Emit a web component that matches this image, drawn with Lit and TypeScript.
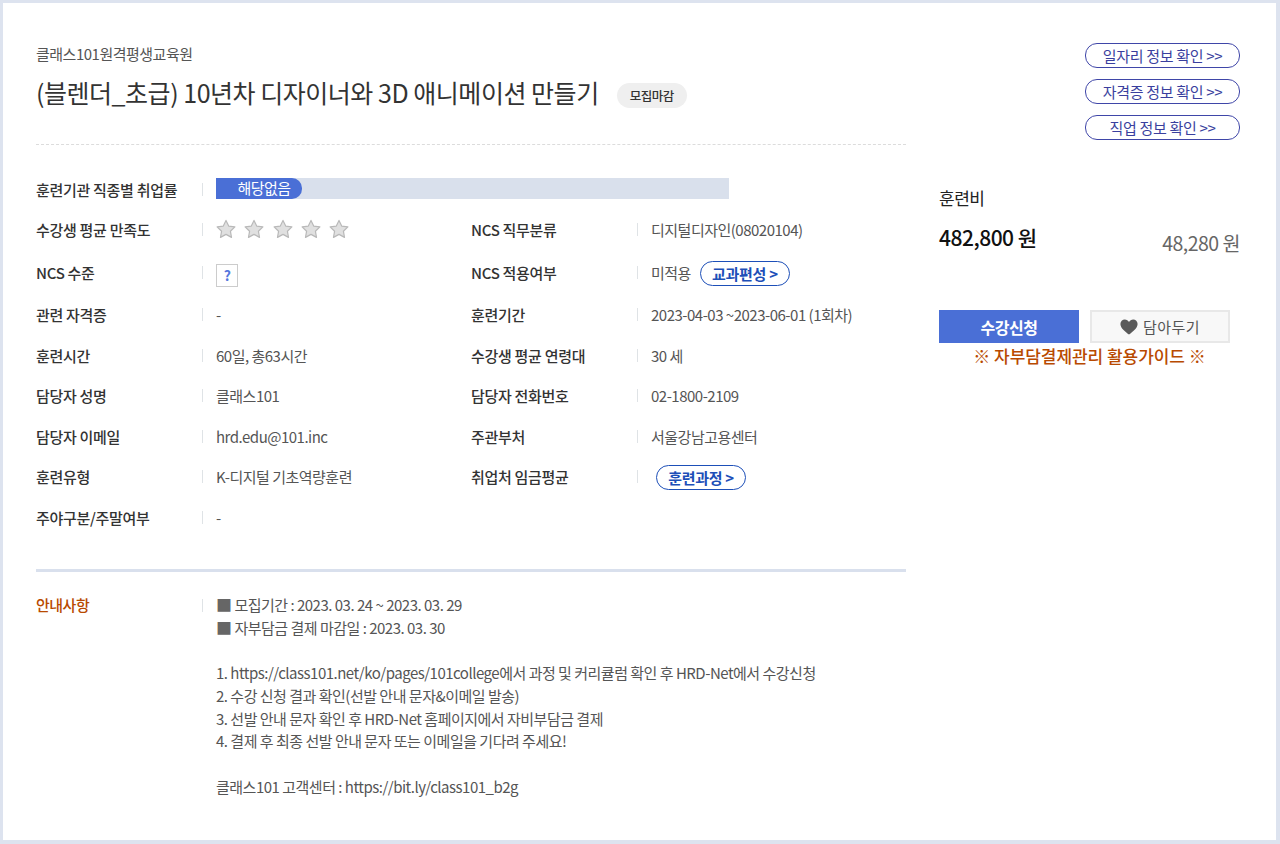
import { LitElement, html, css, svg } from "lit";
import { customElement } from "lit/decorators.js";

const star = svg`<path d="M10 1.400l2.700 5.700 6.200.8-4.500 4.300 1.100 6.200L10 15.400l-5.500 3 1.100-6.200L1.100 7.900l6.200-.8z" fill="#e0e0e0" stroke="#b9b9b9" stroke-width="1.2" stroke-linejoin="round"/>`;

@customElement("app-root")
export class AppRoot extends LitElement {
  static styles = css`
    :host {
      display: block;
      width: 1280px;
      height: 844px;
      box-sizing: border-box;
      border: solid #dde3ef;
      border-width: 3px 4px 4px 3px;
      background: #fff;
      font-family: "Noto Sans CJK KR", "Noto Sans", sans-serif;
      font-size: 15px;
      color: #555;
      letter-spacing: -0.5px;
      overflow: hidden;
    }
    .page {
      display: grid;
      grid-template-columns: 870px 301px;
      column-gap: 33px;
      padding-left: 33px;
    }
    .head {
      height: 142px;
      box-sizing: border-box;
      padding-top: 39px;
      border-bottom: 1px dashed #dcdcdc;
    }
    .org { line-height: 24px; color: #555; }
    .title-row { display: flex; align-items: center; margin-top: 10px; height: 32px; }
    .title { font-size: 25px; line-height: 32px; color: #333; letter-spacing: -0.47px; }
    .tag {
      margin-left: 18px;
      margin-top: 6px;
      width: 70px;
      height: 25px;
      border-radius: 13px;
      background: #efefef;
      color: #333;
      font-size: 12.5px;
      font-weight: 500;
      display: flex;
      align-items: center;
      justify-content: center;
    }
    .grid {
      display: grid;
      grid-template-columns: 166px 269px 166px 269px;
      grid-template-rows: 40px 43px 42px 41px 40px 41px 40px 41px 41px;
      align-items: start;
      padding-top: 32px;
      border-bottom: 3px solid #d9e0ed;
      height: 427px;
      box-sizing: border-box;
    }
    .l, .v { height: 24px; }
    .l { display: flex; align-items: center; color: #333; font-weight: 500; letter-spacing: -0.3px; }
    .v { display: flex; align-items: center; position: relative; padding-left: 14px; color: #555; }
    .v::before {
      content: "";
      position: absolute;
      left: 0;
      top: 50%;
      width: 1px;
      height: 13px;
      margin-top: -6px;
      background: #dfe3e6;
    }
    .full { grid-column: 2 / 5; }
    .bar { width: 513px; height: 21px; margin-top: -2px; background: #d9e0ec; display: flex; }
    .fill {
      width: 86px;
      box-sizing: border-box;
      padding-left: 10px;
      background: #4a6fd6;
      color: #fff;
      border-radius: 0 10px 10px 0;
      text-align: center;
      line-height: 20px;
    }
    .stars { display: flex; gap: 8.3px; }
    .stars svg { width: 20px; height: 20px; display: block; }
    .help {
      width: 20px;
      height: 21px;
      flex: none;
      margin-top: 6px;
      border: 1px solid #ccc;
      color: #5577dd;
      font-weight: 700;
      font-size: 14px;
      display: flex;
      align-items: center;
      justify-content: center;
    }
    .pill {
      width: 88px;
      height: 23px;
      flex: none;
      margin-top: 2px;
      border: 1px solid #1d4fb8;
      border-radius: 13px;
      display: flex;
      align-items: center;
      justify-content: center;
      color: #1d4fb8;
      font-weight: 700;
      letter-spacing: -0.3px;
    }
    .pill.a { margin-left: 9px; }
    .pill.b { margin-left: 5px; }
    .notice {
      display: grid;
      grid-template-columns: 166px 1fr;
      padding-top: 22px;
    }
    .nl { color: #b84a00; font-weight: 500; line-height: 22.7px; }
    .nv {
      position: relative;
      margin: 0;
      padding-left: 14px;
      font: inherit;
      line-height: 22.7px;
      white-space: pre;
      color: #555;
    }
    .nv::before {
      content: "";
      position: absolute;
      left: 0;
      top: 5px;
      width: 1px;
      height: 13px;
      background: #dfe3e6;
    }
    .sq { font-size: 16px; line-height: 0; color: #666; }
    .links {
      display: flex;
      flex-direction: column;
      align-items: flex-end;
      gap: 11px;
      padding-top: 40px;
    }
    .lk {
      width: 153px;
      height: 23px;
      border: 1px solid #3f46a8;
      border-radius: 12px;
      display: flex;
      align-items: center;
      justify-content: center;
      color: #3a3f9e;
      letter-spacing: -0.3px;
    }
    .fee-l { margin-top: 46px; font-size: 17px; line-height: 24px; color: #222; }
    .price { display: flex; justify-content: space-between; margin-top: 13px; height: 32px; }
    .p1 { font-size: 21px; font-weight: 500; color: #111; line-height: 28px; letter-spacing: -0.5px; }
    .p2 { font-size: 19.5px; color: #666; line-height: 28px; margin-top: 6px; }
    .btns { display: flex; gap: 11px; margin-top: 55px; }
    .apply {
      width: 140px;
      height: 33px;
      background: #4a6fd6;
      color: #fff;
      font-size: 16px;
      font-weight: 700;
      display: flex;
      align-items: center;
      justify-content: center;
    }
    .save {
      width: 140px;
      height: 33px;
      box-sizing: border-box;
      background: #f8f8f8;
      border: 2px solid #e8e8e8;
      display: flex;
      align-items: center;
      justify-content: center;
      gap: 5px;
      color: #555;
      letter-spacing: 0.4px;
    }
    .save svg { width: 18px; height: 16px; display: block; }
    .guide {
      text-align: center;
      color: #b84a00;
      font-size: 17px;
      font-weight: 500;
      line-height: 26px;
      letter-spacing: -0.05px;
    }
  `;

  private row(k: string, v: unknown) {
    return html`<div class="l">${k}</div><div class="v">${v}</div>`;
  }

  render() {
    const rest = `

1. https://class101.net/ko/pages/101college에서 과정 및 커리큘럼 확인 후 HRD-Net에서 수강신청
2. 수강 신청 결과 확인(선발 안내 문자&이메일 발송)
3. 선발 안내 문자 확인 후 HRD-Net 홈페이지에서 자비부담금 결제
4. 결제 후 최종 선발 안내 문자 또는 이메일을 기다려 주세요!

클래스101 고객센터 : https://bit.ly/class101_b2g`;
    return html`
      <div class="page">
        <main>
          <header class="head">
            <div class="org">클래스101원격평생교육원</div>
            <div class="title-row">
              <div class="title">(블렌더_초급) 10년차 디자이너와 3D 애니메이션 만들기</div>
              <span class="tag">모집마감</span>
            </div>
          </header>
          <section class="grid">
            <div class="l">훈련기관 직종별 취업률</div>
            <div class="v full"><div class="bar"><div class="fill">해당없음</div></div></div>
            ${this.row("수강생 평균 만족도", html`<div class="stars">
              ${[0, 1, 2, 3, 4].map(() => html`<svg viewBox="0 0 20 20">${star}</svg>`)}
            </div>`)}
            ${this.row("NCS 직무분류", "디지털디자인(08020104)")}
            ${this.row("NCS 수준", html`<span class="help">?</span>`)}
            ${this.row("NCS 적용여부", html`미적용<span class="pill a">교과편성 &gt;</span>`)}
            ${this.row("관련 자격증", "-")}
            ${this.row("훈련기간", "2023-04-03 ~2023-06-01 (1회차)")}
            ${this.row("훈련시간", "60일, 총63시간")}
            ${this.row("수강생 평균 연령대", "30 세")}
            ${this.row("담당자 성명", "클래스101")}
            ${this.row("담당자 전화번호", "02-1800-2109")}
            ${this.row("담당자 이메일", "hrd.edu@101.inc")}
            ${this.row("주관부처", "서울강남고용센터")}
            ${this.row("훈련유형", "K-디지털 기초역량훈련")}
            ${this.row("취업처 임금평균", html`<span class="pill b">훈련과정 &gt;</span>`)}
            ${this.row("주야구분/주말여부", "-")}
          </section>
          <section class="notice">
            <div class="nl">안내사항</div>
            <pre class="nv"><span class="sq">■</span> 모집기간 : 2023. 03. 24 ~ 2023. 03. 29
<span class="sq">■</span> 자부담금 결제 마감일 : 2023. 03. 30${rest}</pre>
          </section>
        </main>
        <aside>
          <div class="links">
            <div class="lk">일자리 정보 확인 &gt;&gt;</div>
            <div class="lk">자격증 정보 확인 &gt;&gt;</div>
            <div class="lk">직업 정보 확인 &gt;&gt;</div>
          </div>
          <div class="fee-l">훈련비</div>
          <div class="price"><span class="p1">482,800 원</span><span class="p2">48,280 원</span></div>
          <div class="btns">
            <div class="apply">수강신청</div>
            <div class="save">
              <svg viewBox="0 0 18 16"><path d="M9 15.600C6 13.200.4 9.400.4 5 .4 2.400 2.400.5 4.800.5 6.600.5 8.100 1.400 9 3c.9-1.600 2.400-2.500 4.200-2.500 2.400 0 4.400 1.900 4.400 4.500 0 4.400-5.600 8.200-8.600 10.600z" fill="#5a5a5a"/></svg>
              담아두기
            </div>
          </div>
          <div class="guide">※ 자부담결제관리 활용가이드 ※</div>
        </aside>
      </div>
    `;
  }
}
